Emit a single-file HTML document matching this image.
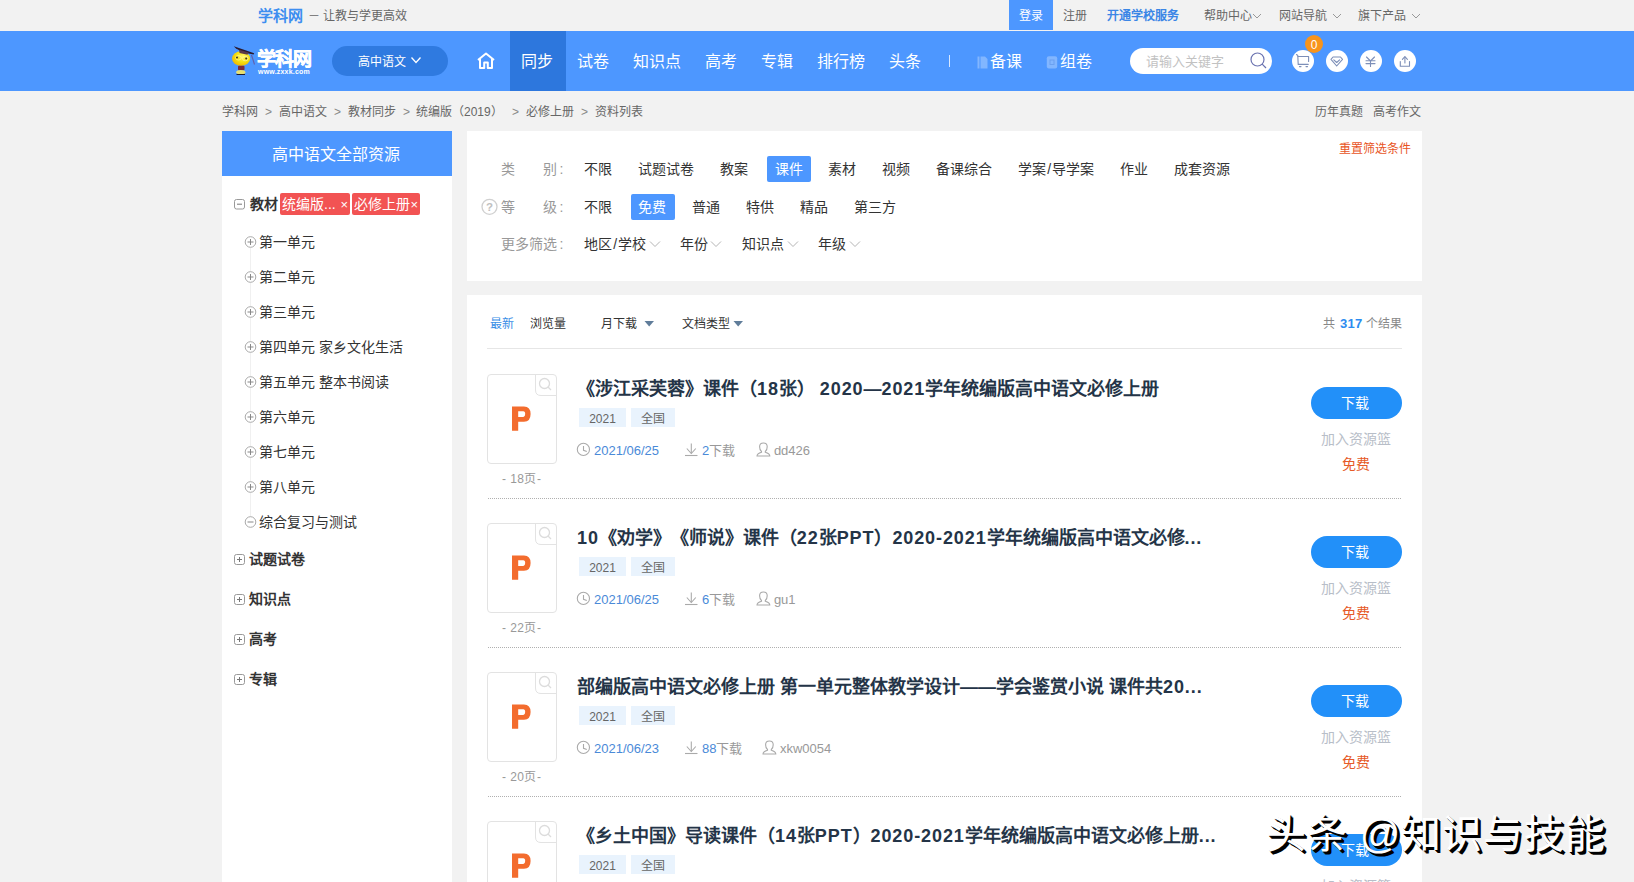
<!DOCTYPE html>
<html lang="zh-CN">
<head>
<meta charset="utf-8">
<style>
*{margin:0;padding:0;box-sizing:border-box;}
html,body{width:1634px;height:882px;overflow:hidden;}
body{text-spacing-trim:space-all;background:#f2f2f2;font-family:"Liberation Sans",sans-serif;color:#333;position:relative;}
.a{position:absolute;white-space:nowrap;}
svg{position:absolute;overflow:visible;}
.t12{font-size:12px;line-height:12px;}
.t13{font-size:13px;line-height:13px;}
.t14{font-size:14px;line-height:14px;}
.navtab{position:absolute;height:16px;line-height:16px;font-size:16px;color:#fff;white-space:nowrap;}
.circ{position:absolute;top:50px;width:22px;height:22px;border-radius:50%;background:#fff;}
.crumb{color:#666;}
.sep{color:#888;font-size:12px;}
.tree{position:absolute;font-size:14px;line-height:14px;color:#333;white-space:nowrap;}
.cat{position:absolute;font-size:14px;line-height:14px;color:#333;font-weight:bold;}
.flab{position:absolute;font-size:14px;line-height:14px;color:#999;white-space:nowrap;}
.fit{position:absolute;font-size:14px;line-height:14px;color:#333;white-space:nowrap;}
.fbtn{position:absolute;height:26px;background:#4d97ff;border-radius:2px;}
.item-title{position:absolute;font-size:18px;line-height:18px;font-weight:bold;color:#243447;white-space:nowrap;}
.lat{letter-spacing:0.9px;}
.tag{position:absolute;height:19px;background:#e9f3fd;color:#666;font-size:12px;line-height:12px;padding-top:5px;text-align:center;}
.thumb{position:absolute;width:70px;height:90px;border:1px solid #e3e3e3;border-radius:4px;background:#fff;}
.pg{position:absolute;font-size:12px;line-height:12px;color:#999;white-space:nowrap;letter-spacing:0.45px;}
.dl{position:absolute;width:91px;height:32px;border-radius:16px;background:#2290f9;color:#fff;font-size:14px;line-height:32px;text-align:center;padding-right:3px;}
.basket{position:absolute;font-size:14px;line-height:14px;color:#b8bec8;white-space:nowrap;}
.free{position:absolute;font-size:14px;line-height:14px;color:#e65a28;}
.meta{position:absolute;font-size:13px;line-height:13px;color:#999;white-space:nowrap;}
.blue{color:#4a8ad8;}
.dots{position:absolute;left:488px;width:914px;height:1px;background-image:linear-gradient(to right,#b0b0b0 50%,transparent 50%);background-size:2px 1px;}
</style>
</head>
<body>

<div class="a" style="left:258px;top:8px;font-size:15px;line-height:15px;font-weight:bold;color:#3d8ef0;">学科网</div>
<div class="a t12" style="left:308px;top:10px;color:#666;">－ 让教与学更高效</div>
<div class="a" style="left:1009px;top:0;width:44px;height:30px;background:#4d97ff;"></div>
<div class="a t12" style="left:1019px;top:10px;color:#fff;">登录</div>
<div class="a t12" style="left:1063px;top:10px;color:#666;">注册</div>
<div class="a t12" style="left:1107px;top:10px;color:#3b86e6;font-weight:bold;">开通学校服务</div>
<div class="a t12" style="left:1204px;top:10px;color:#666;">帮助中心</div>
<div class="a t12" style="left:1279px;top:10px;color:#666;">网站导航</div>
<div class="a t12" style="left:1358px;top:10px;color:#666;">旗下产品</div>
<svg style="left:0;top:0" width="1" height="1"><g fill="none" stroke="#999" stroke-width="1">
<polyline points="1253,14 1257,18 1261,14"/>
<polyline points="1333,14 1337,18 1341,14"/>
<polyline points="1412,14 1416,18 1420,14"/>
</g></svg>

<div class="a" style="left:0;top:31px;width:1634px;height:60px;background:#4d97ff;"></div>
<div class="a" style="left:332px;top:46px;width:116px;height:30px;border-radius:15px;background:#2f7ae0;"></div>
<div class="a t12" style="left:358px;top:56px;color:#fff;">高中语文</div>
<svg style="left:0;top:0" width="1" height="1"><polyline points="411.5,57.5 416,62.5 420.5,57.5" fill="none" stroke="#fff" stroke-width="1.3"/></svg>
<svg style="left:0;top:0" width="1" height="1"><g fill="none" stroke="#fff" stroke-width="2" stroke-linejoin="round">
<polyline points="478,60 486,53.5 494,60"/>
<polyline points="480,59 480,68 484.2,68 484.2,62.5 487.8,62.5 487.8,68 492,68 492,59"/>
</g></svg>
<div class="a" style="left:510px;top:31px;width:56px;height:60px;background:#2d77dd;"></div>
<div class="navtab" style="left:521px;top:54px;">同步</div>
<div class="navtab" style="left:577px;top:54px;">试卷</div>
<div class="navtab" style="left:633px;top:54px;">知识点</div>
<div class="navtab" style="left:705px;top:54px;">高考</div>
<div class="navtab" style="left:761px;top:54px;">专辑</div>
<div class="navtab" style="left:817px;top:54px;">排行榜</div>
<div class="navtab" style="left:889px;top:54px;">头条</div>
<div class="a" style="left:949px;top:55px;width:1px;height:12px;background:#d8e8ff;"></div>
<svg style="left:0;top:0" width="1" height="1"><g fill="rgba(255,255,255,0.3)">
<rect x="977.5" y="56.5" width="2" height="12"/><path d="M980.5,56.5 H985 L987.5,59 V68.5 H980.5 Z"/>
</g><rect x="1046.8" y="56.3" width="10.4" height="12.2" rx="2" fill="rgba(255,255,255,0.3)"/><rect x="1050" y="60" width="4" height="4.5" fill="none" stroke="rgba(40,100,200,0.25)" stroke-width="1"/></svg>
<div class="navtab" style="left:990px;top:54px;">备课</div>
<div class="navtab" style="left:1060px;top:54px;">组卷</div>
<div class="a" style="left:1130px;top:48px;width:142px;height:26px;border-radius:13px;background:#fff;"></div>
<div class="a t13" style="left:1146px;top:55px;color:#c2c2c2;">请输入关键字</div>
<svg style="left:0;top:0" width="1" height="1"><g fill="none" stroke="#6b73b0" stroke-width="1.2">
<circle cx="1257.5" cy="59.5" r="6.5"/><line x1="1262.2" y1="64.2" x2="1266" y2="68"/>
</g></svg>
<div class="circ" style="left:1292px;"></div>
<div class="circ" style="left:1326px;"></div>
<div class="circ" style="left:1360px;"></div>
<div class="circ" style="left:1394px;"></div>
<svg style="left:0;top:0" width="1" height="1"><g fill="none" stroke="#7d8fb8" stroke-width="1.1" stroke-linecap="round" stroke-linejoin="round">
<polyline points="1296.5,54.5 1297.8,55.5 1298.2,64.4 1308.2,64.4"/><polyline points="1298,56.5 1308.6,56.5 1308.6,61.5"/>
<line x1="1299.5" y1="66.6" x2="1301" y2="66.6"/><line x1="1306" y1="66.6" x2="1307.5" y2="66.6"/>
<polyline points="1333,57 1340.5,57 1342.5,59.3 1336.7,66 1331,59.3 1333,57"/><polyline points="1333.8,59.8 1336.7,62.5 1339.6,59.8"/>
<polyline points="1366.5,57 1370.5,61 1374.5,57"/><line x1="1366" y1="60.7" x2="1375" y2="60.7"/><line x1="1366" y1="63.6" x2="1375" y2="63.6"/><line x1="1370.5" y1="61" x2="1370.5" y2="66.5"/>
<polyline points="1400.3,61.5 1400.3,66.3 1409.5,66.3 1409.5,61.5"/><line x1="1404.9" y1="57" x2="1404.9" y2="63"/><polyline points="1402.4,59.4 1404.9,56.7 1407.4,59.4"/>
</g></svg>
<div class="a" style="left:1305px;top:35px;width:18px;height:18px;border-radius:50%;background:#f8941c;color:#fff;font-size:12px;line-height:20px;text-align:center;">0</div>

<svg style="left:0;top:0" width="1" height="1">
<defs><radialGradient id="hg" cx="0.6" cy="0.35" r="0.7"><stop offset="0" stop-color="#fff86a"/><stop offset="0.55" stop-color="#f5e010"/><stop offset="1" stop-color="#f0b400"/></radialGradient></defs>
<ellipse cx="241.1" cy="58.6" rx="9.1" ry="7.3" fill="url(#hg)"/>
<polygon points="233.8,46.2 254.2,53.2 253.6,54.6 243.5,52.6 236,48.4" fill="#2a1a30"/>
<polygon points="239,49.8 248.5,52.4 247.5,54.8 239.5,53" fill="#5a3a4a"/>
<line x1="251.5" y1="55" x2="254.5" y2="64.5" stroke="#6a4a8a" stroke-width="1.1" opacity="0.7"/>
<ellipse cx="238.5" cy="57.8" rx="2.8" ry="2.2" fill="none" stroke="#fff8b0" stroke-width="0.8" opacity="0.8"/><ellipse cx="245.3" cy="58.6" rx="2.8" ry="2.2" fill="none" stroke="#fff8b0" stroke-width="0.8" opacity="0.8"/>
<circle cx="237" cy="57.5" r="1" fill="#3a3020"/><circle cx="246.2" cy="58.4" r="1" fill="#3a3020"/>
<rect x="238" y="65.8" width="6.5" height="4.5" rx="1" fill="#7a2a3a"/>
<ellipse cx="240.8" cy="72.2" rx="4.6" ry="2.1" fill="#e8e070"/>
<line x1="236.5" y1="74.5" x2="245" y2="74.5" stroke="#1a1a30" stroke-width="1"/>
</svg>
<div class="a" style="left:256.5px;top:49px;font-size:19px;line-height:21px;font-weight:bold;color:#fff;letter-spacing:-0.6px;-webkit-text-stroke:0.5px #fff;">学科网</div>
<div class="a" style="left:258px;top:68px;font-size:7px;line-height:7px;font-weight:bold;color:#fff;letter-spacing:0.2px;">www.zxxk.com</div>
<div class="a t12 crumb" style="left:222px;top:106px;">学科网</div>
<div class="a t12 sep" style="left:265px;top:106px;">></div>
<div class="a t12 crumb" style="left:279px;top:106px;">高中语文</div>
<div class="a t12 sep" style="left:334px;top:106px;">></div>
<div class="a t12 crumb" style="left:348px;top:106px;">教材同步</div>
<div class="a t12 sep" style="left:403px;top:106px;">></div>
<div class="a t12 crumb" style="left:416px;top:106px;">统编版（2019）</div>
<div class="a t12 sep" style="left:512px;top:106px;">></div>
<div class="a t12 crumb" style="left:526px;top:106px;">必修上册</div>
<div class="a t12 sep" style="left:581px;top:106px;">></div>
<div class="a t12 crumb" style="left:595px;top:106px;">资料列表</div>
<div class="a t12 crumb" style="left:1315px;top:106px;">历年真题</div>
<div class="a t12 crumb" style="left:1373px;top:106px;">高考作文</div>

<div class="a" style="left:222px;top:131px;width:230px;height:751px;background:#fff;"></div>
<div class="a" style="left:222px;top:131px;width:230px;height:45px;background:#4d97ff;"></div>
<div class="a" style="left:272px;top:146.5px;font-size:16px;line-height:16px;color:#fff;">高中语文全部资源</div>
<svg style="left:0;top:0" width="1" height="1"><rect x="234.5" y="199.5" width="10" height="9.5" rx="2" fill="none" stroke="#999" stroke-width="1"/><line x1="237" y1="204.2" x2="242" y2="204.2" stroke="#777" stroke-width="1"/></svg>
<div class="cat" style="left:250px;top:197px;">教材</div>
<div class="a" style="left:280px;top:193px;width:70px;height:21.5px;background:#f25353;border-radius:2px;"></div>
<div class="a t14" style="left:282px;top:197px;color:#fff;">统编版...</div>
<div class="a" style="left:340.5px;top:197.5px;font-size:13px;line-height:13px;color:#fff;">×</div>
<div class="a" style="left:352px;top:193px;width:68px;height:21.5px;background:#f25353;border-radius:2px;"></div>
<div class="a t14" style="left:354px;top:197px;color:#fff;">必修上册</div>
<div class="a" style="left:410.5px;top:197.5px;font-size:13px;line-height:13px;color:#fff;">×</div>
<div class="a" style="left:250px;top:248px;width:1px;height:270px;background:#f0f0f0;"></div>
<svg style="left:0;top:0" width="1" height="1"><circle cx="250.5" cy="242" r="5.3" fill="#fff" stroke="#aaa" stroke-width="1"/><line x1="247.5" y1="242" x2="253.5" y2="242" stroke="#888" stroke-width="1"/><line x1="250.5" y1="239" x2="250.5" y2="245" stroke="#888" stroke-width="1"/></svg>
<div class="tree" style="left:259px;top:235px;">第一单元</div>
<svg style="left:0;top:0" width="1" height="1"><circle cx="250.5" cy="277" r="5.3" fill="#fff" stroke="#aaa" stroke-width="1"/><line x1="247.5" y1="277" x2="253.5" y2="277" stroke="#888" stroke-width="1"/><line x1="250.5" y1="274" x2="250.5" y2="280" stroke="#888" stroke-width="1"/></svg>
<div class="tree" style="left:259px;top:270px;">第二单元</div>
<svg style="left:0;top:0" width="1" height="1"><circle cx="250.5" cy="312" r="5.3" fill="#fff" stroke="#aaa" stroke-width="1"/><line x1="247.5" y1="312" x2="253.5" y2="312" stroke="#888" stroke-width="1"/><line x1="250.5" y1="309" x2="250.5" y2="315" stroke="#888" stroke-width="1"/></svg>
<div class="tree" style="left:259px;top:305px;">第三单元</div>
<svg style="left:0;top:0" width="1" height="1"><circle cx="250.5" cy="347" r="5.3" fill="#fff" stroke="#aaa" stroke-width="1"/><line x1="247.5" y1="347" x2="253.5" y2="347" stroke="#888" stroke-width="1"/><line x1="250.5" y1="344" x2="250.5" y2="350" stroke="#888" stroke-width="1"/></svg>
<div class="tree" style="left:259px;top:340px;">第四单元 家乡文化生活</div>
<svg style="left:0;top:0" width="1" height="1"><circle cx="250.5" cy="382" r="5.3" fill="#fff" stroke="#aaa" stroke-width="1"/><line x1="247.5" y1="382" x2="253.5" y2="382" stroke="#888" stroke-width="1"/><line x1="250.5" y1="379" x2="250.5" y2="385" stroke="#888" stroke-width="1"/></svg>
<div class="tree" style="left:259px;top:375px;">第五单元 整本书阅读</div>
<svg style="left:0;top:0" width="1" height="1"><circle cx="250.5" cy="417" r="5.3" fill="#fff" stroke="#aaa" stroke-width="1"/><line x1="247.5" y1="417" x2="253.5" y2="417" stroke="#888" stroke-width="1"/><line x1="250.5" y1="414" x2="250.5" y2="420" stroke="#888" stroke-width="1"/></svg>
<div class="tree" style="left:259px;top:410px;">第六单元</div>
<svg style="left:0;top:0" width="1" height="1"><circle cx="250.5" cy="452" r="5.3" fill="#fff" stroke="#aaa" stroke-width="1"/><line x1="247.5" y1="452" x2="253.5" y2="452" stroke="#888" stroke-width="1"/><line x1="250.5" y1="449" x2="250.5" y2="455" stroke="#888" stroke-width="1"/></svg>
<div class="tree" style="left:259px;top:445px;">第七单元</div>
<svg style="left:0;top:0" width="1" height="1"><circle cx="250.5" cy="487" r="5.3" fill="#fff" stroke="#aaa" stroke-width="1"/><line x1="247.5" y1="487" x2="253.5" y2="487" stroke="#888" stroke-width="1"/><line x1="250.5" y1="484" x2="250.5" y2="490" stroke="#888" stroke-width="1"/></svg>
<div class="tree" style="left:259px;top:480px;">第八单元</div>
<svg style="left:0;top:0" width="1" height="1"><circle cx="250.5" cy="522" r="5.3" fill="#fff" stroke="#aaa" stroke-width="1"/><line x1="247.5" y1="522" x2="253.5" y2="522" stroke="#888" stroke-width="1"/></svg>
<div class="tree" style="left:259px;top:515px;">综合复习与测试</div>
<svg style="left:0;top:0" width="1" height="1"><rect x="234.5" y="554.5" width="10" height="10" rx="2" fill="none" stroke="#999" stroke-width="1"/><line x1="237" y1="559.5" x2="242" y2="559.5" stroke="#777"/><line x1="239.5" y1="557" x2="239.5" y2="562" stroke="#777"/></svg>
<div class="cat" style="left:249px;top:552px;">试题试卷</div>
<svg style="left:0;top:0" width="1" height="1"><rect x="234.5" y="594.5" width="10" height="10" rx="2" fill="none" stroke="#999" stroke-width="1"/><line x1="237" y1="599.5" x2="242" y2="599.5" stroke="#777"/><line x1="239.5" y1="597" x2="239.5" y2="602" stroke="#777"/></svg>
<div class="cat" style="left:249px;top:592px;">知识点</div>
<svg style="left:0;top:0" width="1" height="1"><rect x="234.5" y="634.5" width="10" height="10" rx="2" fill="none" stroke="#999" stroke-width="1"/><line x1="237" y1="639.5" x2="242" y2="639.5" stroke="#777"/><line x1="239.5" y1="637" x2="239.5" y2="642" stroke="#777"/></svg>
<div class="cat" style="left:249px;top:632px;">高考</div>
<svg style="left:0;top:0" width="1" height="1"><rect x="234.5" y="674.5" width="10" height="10" rx="2" fill="none" stroke="#999" stroke-width="1"/><line x1="237" y1="679.5" x2="242" y2="679.5" stroke="#777"/><line x1="239.5" y1="677" x2="239.5" y2="682" stroke="#777"/></svg>
<div class="cat" style="left:249px;top:672px;">专辑</div>

<div class="a" style="left:467px;top:131px;width:955px;height:150px;background:#fff;"></div>
<div class="a t12" style="left:1339px;top:143px;color:#e8541e;">重置筛选条件</div>
<div class="flab" style="left:501px;top:162px;">类</div><div class="flab" style="left:543px;top:162px;">别<span style="margin-left:2.5px">:</span></div>
<div class="flab" style="left:501px;top:200px;">等</div><div class="flab" style="left:543px;top:200px;">级<span style="margin-left:2.5px">:</span></div>
<div class="flab" style="left:501px;top:237px;">更多筛选<span style="margin-left:2.5px">:</span></div>
<svg style="left:0;top:0" width="1" height="1"><circle cx="489.5" cy="206.8" r="7.5" fill="none" stroke="#d0d0d0" stroke-width="1.3"/><text x="489.5" y="211" font-size="11.5" font-weight="bold" fill="#c0c0c0" text-anchor="middle" font-family="Liberation Sans">?</text></svg>
<div class="fbtn" style="left:767px;top:156px;width:44px;"></div>
<div class="fbtn" style="left:631px;top:194px;width:44px;"></div>
<div class="fit" style="left:584px;top:162px;color:#333;">不限</div>
<div class="fit" style="left:638px;top:162px;color:#333;">试题试卷</div>
<div class="fit" style="left:720px;top:162px;color:#333;">教案</div>
<div class="fit" style="left:775px;top:162px;color:#fff;">课件</div>
<div class="fit" style="left:828px;top:162px;color:#333;">素材</div>
<div class="fit" style="left:882px;top:162px;color:#333;">视频</div>
<div class="fit" style="left:936px;top:162px;color:#333;">备课综合</div>
<div class="fit" style="left:1018px;top:162px;color:#333;">学案<span style='margin:0 1.3px'>/</span>导学案</div>
<div class="fit" style="left:1120px;top:162px;color:#333;">作业</div>
<div class="fit" style="left:1174px;top:162px;color:#333;">成套资源</div>
<div class="fit" style="left:584px;top:200px;color:#333;">不限</div>
<div class="fit" style="left:638px;top:200px;color:#fff;">免费</div>
<div class="fit" style="left:692px;top:200px;color:#333;">普通</div>
<div class="fit" style="left:746px;top:200px;color:#333;">特供</div>
<div class="fit" style="left:800px;top:200px;color:#333;">精品</div>
<div class="fit" style="left:854px;top:200px;color:#333;">第三方</div>
<div class="fit" style="left:584px;top:237px;">地区<span style='margin:0 1.2px'>/</span>学校</div>
<svg style="left:0;top:0" width="1" height="1"><polyline points="650,241.5 655,246.5 660,241.5" fill="none" stroke="#b5b5b5" stroke-width="1"/></svg>
<div class="fit" style="left:680px;top:237px;">年份</div>
<svg style="left:0;top:0" width="1" height="1"><polyline points="711,241.5 716,246.5 721,241.5" fill="none" stroke="#b5b5b5" stroke-width="1"/></svg>
<div class="fit" style="left:742px;top:237px;">知识点</div>
<svg style="left:0;top:0" width="1" height="1"><polyline points="788,241.5 793,246.5 798,241.5" fill="none" stroke="#b5b5b5" stroke-width="1"/></svg>
<div class="fit" style="left:818px;top:237px;">年级</div>
<svg style="left:0;top:0" width="1" height="1"><polyline points="850,241.5 855,246.5 860,241.5" fill="none" stroke="#b5b5b5" stroke-width="1"/></svg>

<div class="a" style="left:467px;top:295px;width:955px;height:587px;background:#fff;"></div>
<div class="a t12" style="left:490px;top:318px;color:#3a8ee6;">最新</div>
<div class="a t12" style="left:530px;top:318px;color:#333;">浏览量</div>
<div class="a t12" style="left:601px;top:318px;color:#333;">月下载</div>
<div class="a t12" style="left:682px;top:318px;color:#333;">文档类型</div>
<svg style="left:0;top:0" width="1" height="1"><polygon points="644.5,321 654,321 649.2,326.5" fill="#607d9a"/><polygon points="733.5,321 743,321 738.2,326.5" fill="#607d9a"/></svg>
<div class="a t12" style="left:1323px;top:318px;color:#888;">共</div>
<div class="a" style="left:1340px;top:317px;font-size:13px;line-height:13px;font-weight:bold;color:#2d8cf0;letter-spacing:0.3px;">317</div>
<div class="a t12" style="left:1366px;top:318px;color:#888;">个结果</div>
<div class="a" style="left:487px;top:348px;width:915px;height:1px;background:#e6e6e6;"></div>
<div class="thumb" style="left:487px;top:374px;"></div>
<svg style="left:0;top:0" width="1" height="1"><path d="M535.5,374 V390 Q535.5,395.5 541,395.5 H557" fill="none" stroke="#e3e3e3" stroke-width="1"/><circle cx="544.5" cy="383.5" r="5" fill="none" stroke="#dcdcdc" stroke-width="1.3"/><line x1="548" y1="387" x2="551" y2="390" stroke="#dcdcdc" stroke-width="1.3"/></svg>
<svg style="left:0;top:0" width="1" height="1"><path fill-rule="evenodd" fill="#f36c2e" d="M512,406.5 H524 Q530.6,406.5 530.6,414 Q530.6,421.7 524,421.7 H518.2 V430.7 H512 Z M518.2,411.3 H523.3 Q525.2,411.3 525.2,414.1 Q525.2,416.9 523.3,416.9 H518.2 Z"/></svg>
<div class="item-title" style="left:577px;top:380px;">《涉江采芙蓉》课件（<span class="lat">18</span>张） <span class="lat">2020</span>—<span class="lat">2021</span>学年统编版高中语文必修上册</div>
<div class="tag" style="left:579px;top:408px;width:47px;">2021</div>
<div class="tag" style="left:631px;top:408px;width:44px;">全国</div>
<div class="dl" style="left:1311px;top:387px;">下载</div>
<div class="basket" style="left:1321px;top:432px;">加入资源篮</div>
<div class="free" style="left:1342px;top:457px;">免费</div>
<div class="pg" style="left:502px;top:473px;">- 18页-</div>
<svg style="left:0;top:0" width="1" height="1"><g fill="none" stroke="#aaa" stroke-width="1.1"><circle cx="583.4" cy="449.4" r="6.1"/><polyline points="583.5,446 583.5,450.3 586.8,451.6"/><line x1="691.3" y1="443.5" x2="691.3" y2="453.5"/><polyline points="686.8,448.5 691.3,453.5 695.8,448.5"/><line x1="685" y1="455.5" x2="697.5" y2="455.5"/><path transform="translate(0.0,0)" d="M761.5,451.5 C759.6,450 759.6,447.8 759.6,446.7 C759.6,444.2 761.2,443 763.4,443 C765.6,443 767.2,444.2 767.2,446.7 C767.2,447.8 767.2,450 765.3,451.5 L765.3,452.3 C767.6,453 769.8,454 769.8,456 L757,456 C757,454 759.2,453 761.5,452.3 Z"/></g></svg>
<div class="meta blue" style="left:594px;top:444px;">2021/06/25</div>
<div class="meta" style="left:702px;top:444px;"><span class="blue">2</span>下载</div>
<div class="meta" style="left:773.9px;top:444px;">dd426</div>
<div class="dots" style="top:498px;"></div>
<div class="thumb" style="left:487px;top:523px;"></div>
<svg style="left:0;top:0" width="1" height="1"><path d="M535.5,523 V539 Q535.5,544.5 541,544.5 H557" fill="none" stroke="#e3e3e3" stroke-width="1"/><circle cx="544.5" cy="532.5" r="5" fill="none" stroke="#dcdcdc" stroke-width="1.3"/><line x1="548" y1="536" x2="551" y2="539" stroke="#dcdcdc" stroke-width="1.3"/></svg>
<svg style="left:0;top:0" width="1" height="1"><path fill-rule="evenodd" fill="#f36c2e" d="M512,555.5 H524 Q530.6,555.5 530.6,563 Q530.6,570.7 524,570.7 H518.2 V579.7 H512 Z M518.2,560.3 H523.3 Q525.2,560.3 525.2,563.1 Q525.2,565.9 523.3,565.9 H518.2 Z"/></svg>
<div class="item-title" style="left:577px;top:529px;"><span class="lat">10</span>《劝学》《师说》课件（<span class="lat">22</span>张<span class="lat">PPT</span>）<span class="lat">2020-2021</span>学年统编版高中语文必修<span class="lat">...</span></div>
<div class="tag" style="left:579px;top:557px;width:47px;">2021</div>
<div class="tag" style="left:631px;top:557px;width:44px;">全国</div>
<div class="dl" style="left:1311px;top:536px;">下载</div>
<div class="basket" style="left:1321px;top:581px;">加入资源篮</div>
<div class="free" style="left:1342px;top:606px;">免费</div>
<div class="pg" style="left:502px;top:622px;">- 22页-</div>
<svg style="left:0;top:0" width="1" height="1"><g fill="none" stroke="#aaa" stroke-width="1.1"><circle cx="583.4" cy="598.4" r="6.1"/><polyline points="583.5,595 583.5,599.3 586.8,600.6"/><line x1="691.3" y1="592.5" x2="691.3" y2="602.5"/><polyline points="686.8,597.5 691.3,602.5 695.8,597.5"/><line x1="685" y1="604.5" x2="697.5" y2="604.5"/><path transform="translate(0.0,149)" d="M761.5,451.5 C759.6,450 759.6,447.8 759.6,446.7 C759.6,444.2 761.2,443 763.4,443 C765.6,443 767.2,444.2 767.2,446.7 C767.2,447.8 767.2,450 765.3,451.5 L765.3,452.3 C767.6,453 769.8,454 769.8,456 L757,456 C757,454 759.2,453 761.5,452.3 Z"/></g></svg>
<div class="meta blue" style="left:594px;top:593px;">2021/06/25</div>
<div class="meta" style="left:702px;top:593px;"><span class="blue">6</span>下载</div>
<div class="meta" style="left:773.9px;top:593px;">gu1</div>
<div class="dots" style="top:647px;"></div>
<div class="thumb" style="left:487px;top:672px;"></div>
<svg style="left:0;top:0" width="1" height="1"><path d="M535.5,672 V688 Q535.5,693.5 541,693.5 H557" fill="none" stroke="#e3e3e3" stroke-width="1"/><circle cx="544.5" cy="681.5" r="5" fill="none" stroke="#dcdcdc" stroke-width="1.3"/><line x1="548" y1="685" x2="551" y2="688" stroke="#dcdcdc" stroke-width="1.3"/></svg>
<svg style="left:0;top:0" width="1" height="1"><path fill-rule="evenodd" fill="#f36c2e" d="M512,704.5 H524 Q530.6,704.5 530.6,712 Q530.6,719.7 524,719.7 H518.2 V728.7 H512 Z M518.2,709.3 H523.3 Q525.2,709.3 525.2,712.1 Q525.2,714.9 523.3,714.9 H518.2 Z"/></svg>
<div class="item-title" style="left:577px;top:678px;">部编版高中语文必修上册 第一单元整体教学设计——学会鉴赏小说 课件共<span class="lat">20...</span></div>
<div class="tag" style="left:579px;top:706px;width:47px;">2021</div>
<div class="tag" style="left:631px;top:706px;width:44px;">全国</div>
<div class="dl" style="left:1311px;top:685px;">下载</div>
<div class="basket" style="left:1321px;top:730px;">加入资源篮</div>
<div class="free" style="left:1342px;top:755px;">免费</div>
<div class="pg" style="left:502px;top:771px;">- 20页-</div>
<svg style="left:0;top:0" width="1" height="1"><g fill="none" stroke="#aaa" stroke-width="1.1"><circle cx="583.4" cy="747.4" r="6.1"/><polyline points="583.5,744 583.5,748.3 586.8,749.6"/><line x1="691.3" y1="741.5" x2="691.3" y2="751.5"/><polyline points="686.8,746.5 691.3,751.5 695.8,746.5"/><line x1="685" y1="753.5" x2="697.5" y2="753.5"/><path transform="translate(6.0,298)" d="M761.5,451.5 C759.6,450 759.6,447.8 759.6,446.7 C759.6,444.2 761.2,443 763.4,443 C765.6,443 767.2,444.2 767.2,446.7 C767.2,447.8 767.2,450 765.3,451.5 L765.3,452.3 C767.6,453 769.8,454 769.8,456 L757,456 C757,454 759.2,453 761.5,452.3 Z"/></g></svg>
<div class="meta blue" style="left:594px;top:742px;">2021/06/23</div>
<div class="meta" style="left:702px;top:742px;"><span class="blue">88</span>下载</div>
<div class="meta" style="left:779.9px;top:742px;">xkw0054</div>
<div class="dots" style="top:796px;"></div>
<div class="thumb" style="left:487px;top:821px;"></div>
<svg style="left:0;top:0" width="1" height="1"><path d="M535.5,821 V837 Q535.5,842.5 541,842.5 H557" fill="none" stroke="#e3e3e3" stroke-width="1"/><circle cx="544.5" cy="830.5" r="5" fill="none" stroke="#dcdcdc" stroke-width="1.3"/><line x1="548" y1="834" x2="551" y2="837" stroke="#dcdcdc" stroke-width="1.3"/></svg>
<svg style="left:0;top:0" width="1" height="1"><path fill-rule="evenodd" fill="#f36c2e" d="M512,853.5 H524 Q530.6,853.5 530.6,861 Q530.6,868.7 524,868.7 H518.2 V877.7 H512 Z M518.2,858.3 H523.3 Q525.2,858.3 525.2,861.1 Q525.2,863.9 523.3,863.9 H518.2 Z"/></svg>
<div class="item-title" style="left:577px;top:827px;">《乡土中国》导读课件（<span class="lat">14</span>张<span class="lat">PPT</span>）<span class="lat">2020-2021</span>学年统编版高中语文必修上册<span class="lat">...</span></div>
<div class="tag" style="left:579px;top:855px;width:47px;">2021</div>
<div class="tag" style="left:631px;top:855px;width:44px;">全国</div>
<div class="dl" style="left:1311px;top:834px;">下载</div>
<div class="basket" style="left:1321px;top:879px;">加入资源篮</div>
<div class="free" style="left:1342px;top:904px;">免费</div>

<div class="a" style="left:1266px;top:812px;font-size:40px;line-height:44px;font-weight:300;color:#fff;text-shadow:1px 1px 0 #000,2px 2px 0 #000,3px 3px 0 #000;letter-spacing:0.9px;">头条 @知识与技能</div>
</body>
</html>
